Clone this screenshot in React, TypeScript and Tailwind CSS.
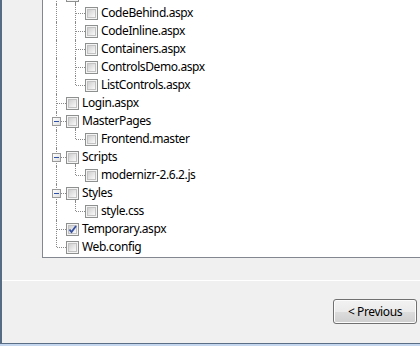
import React from "react";

type Row = {
  level: 2 | 3;
  name: string;
  expanded?: boolean;
  last?: boolean;
  checked?: boolean;
  hideText?: boolean;
};

const rows: Row[] = [
  { level: 2, name: "Pages", expanded: true, hideText: true },
  { level: 3, name: "CodeBehind.aspx" },
  { level: 3, name: "CodeInline.aspx" },
  { level: 3, name: "Containers.aspx" },
  { level: 3, name: "ControlsDemo.aspx" },
  { level: 3, name: "ListControls.aspx", last: true },
  { level: 2, name: "Login.aspx" },
  { level: 2, name: "MasterPages", expanded: true },
  { level: 3, name: "Frontend.master", last: true },
  { level: 2, name: "Scripts", expanded: true },
  { level: 3, name: "modernizr-2.6.2.js", last: true },
  { level: 2, name: "Styles", expanded: true },
  { level: 3, name: "style.css", last: true },
  { level: 2, name: "Temporary.aspx", checked: true },
  { level: 2, name: "Web.config", last: true },
];

function Connector({ last, expandBox }: { last?: boolean; expandBox?: boolean }) {
  return (
    <div className="relative w-[19px] h-full shrink-0">
      <div
        className={
          last
            ? "absolute left-[9px] top-0 h-[9px] border-l border-dotted border-[#8a8a8a]"
            : "absolute left-[9px] top-0 bottom-0 border-l border-dotted border-[#8a8a8a]"
        }
      />
      <div className="absolute left-[10px] right-0 top-[9px] border-t border-dotted border-[#8a8a8a]" />
      {expandBox && (
        <div className="absolute left-[5px] top-[5px] w-[9px] h-[9px] border border-[#9a9a9a] bg-[linear-gradient(135deg,#ffffff,#dedede)] flex items-center justify-center">
          <div className="w-[5px] h-px bg-[#2f52a8]" />
        </div>
      )}
    </div>
  );
}

function PassThrough() {
  return (
    <div className="relative w-[19px] h-full shrink-0">
      <div className="absolute left-[9px] top-0 bottom-0 border-l border-dotted border-[#8a8a8a]" />
    </div>
  );
}

function CheckBox({ checked, expanded }: { checked?: boolean; expanded?: boolean }) {
  return (
    <div className="relative w-[13px] h-full shrink-0">
      <div className="absolute left-0 top-[3px] w-[13px] h-[13px] border border-[#8e8f8f] bg-[#f4f4f4] p-px">
        <div className="w-full h-full border border-[#c2c2c2] bg-[linear-gradient(135deg,#cfcfcf,#fafafa)]" />
        {checked && (
          <svg className="absolute left-0 top-0" width="11" height="11" viewBox="0 0 11 11">
            <path d="M2.5 5.5 L4.5 8 L9 2" fill="none" stroke="#3550a0" strokeWidth="1.8" />
          </svg>
        )}
      </div>
      {expanded && (
        <div className="absolute left-[9px] top-[16px] bottom-0 border-l border-dotted border-[#8a8a8a]" />
      )}
    </div>
  );
}

export default function App() {
  return (
    <div className="w-[420px] h-[346px] overflow-hidden bg-[#f0f0f0] flex flex-col font-['Segoe_UI','Noto_Sans',sans-serif] text-[12px] tracking-[-0.4px] text-black">
      <div className="flex-1 flex flex-col border-l-2 border-[#566b84]">
        <div className="ml-[40px] -mr-[10px] h-[258px] shrink-0 bg-white border-l border-b border-[#828790] overflow-hidden">
          <div className="mt-[-14px] pl-[4px] flex flex-col">
            {rows.map((r) => (
              <div key={r.name} className="flex h-[18px] items-stretch">
                {r.level === 2 ? (
                  <Connector last={r.last} expandBox={r.expanded} />
                ) : (
                  <>
                    <PassThrough />
                    <Connector last={r.last} />
                  </>
                )}
                <CheckBox checked={r.checked} expanded={r.expanded} />
                {!r.hideText && (
                  <span className="ml-[3px] leading-[18px] whitespace-nowrap">{r.name}</span>
                )}
              </div>
            ))}
          </div>
        </div>
        <div className="mt-[22px] border-t border-white" />
        <div className="mt-[18px] flex justify-end pr-[3px]">
          <button className="w-[84px] h-[25px] rounded-[3px] border border-[#707070] bg-[linear-gradient(#f2f2f2_0%,#ebebeb_50%,#dddddd_50%,#cfcfcf_100%)] shadow-[inset_0_0_0_1px_#fcfcfc] text-[12px] leading-none text-black flex items-center justify-center">
            &lt; Previous
          </button>
        </div>
      </div>
      <div className="h-px bg-[#5a6e86]" />
      <div className="h-[2px] bg-[#c4d7ee]" />
    </div>
  );
}
